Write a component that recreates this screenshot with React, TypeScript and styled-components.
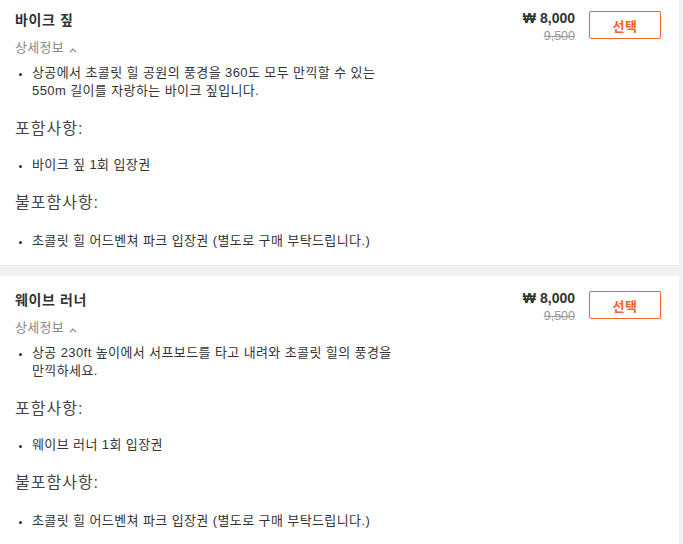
import React from 'react';
import styled, { createGlobalStyle } from 'styled-components';

const GlobalStyle = createGlobalStyle`
  html, body {
    margin: 0;
    padding: 0;
    background: #f2f2f2;
  }
  body {
    font-family: 'Liberation Sans', 'Noto Sans CJK KR', sans-serif;
    color: #333;
  }
`;

interface Product {
  name: string;
  description: string;
  includes: string[];
  excludes: string[];
  price: string;
  originalPrice: string;
}

const products: Product[] = [
  {
    name: '바이크 짚',
    description: '상공에서 초콜릿 힐 공원의 풍경을 360도 모두 만끽할 수 있는 550m 길이를 자랑하는 바이크 짚입니다.',
    includes: ['바이크 짚 1회 입장권'],
    excludes: ['초콜릿 힐 어드벤쳐 파크 입장권 (별도로 구매 부탁드립니다.)'],
    price: '8,000',
    originalPrice: '9,500',
  },
  {
    name: '웨이브 러너',
    description: '상공 230ft 높이에서 서프보드를 타고 내려와 초콜릿 힐의 풍경을 만끽하세요.',
    includes: ['웨이브 러너 1회 입장권'],
    excludes: ['초콜릿 힐 어드벤쳐 파크 입장권 (별도로 구매 부탁드립니다.)'],
    price: '8,000',
    originalPrice: '9,500',
  },
];

const List = styled.div`
  margin-top: -4px;
  display: flex;
  flex-direction: column;
  gap: 10px;
`;

const Card = styled.section`
  background: #fff;
  margin-right: 4px;
  height: 270px;
  box-sizing: border-box;
  padding: 14px 18px 16px 15px;
  display: flex;
  justify-content: space-between;
  border-bottom: 1px solid #e8e8e8;
`;

const Info = styled.div`
  display: flex;
  flex-direction: column;
  width: 385px;
`;

const Title = styled.h3`
  margin: 0;
  font-size: 14px;
  line-height: 20px;
  font-weight: bold;
  letter-spacing: 0.6px;
  color: #333;
`;

const DetailToggle = styled.div`
  margin-top: 9px;
  font-size: 13px;
  line-height: 18px;
  letter-spacing: 0.3px;
  color: #888;
  display: flex;
  align-items: center;
  gap: 5px;
`;

const Bullets = styled.ul<{ $top: number }>`
  margin: ${p => p.$top}px 0 0;
  padding-left: 17px;
  font-size: 13px;
  line-height: 18px;
  letter-spacing: 0.4px;
  word-break: keep-all;
  color: #333;

  li::marker {
    font-size: 11px;
  }
`;

const SectionLabel = styled.h4`
  margin: 18px 0 0;
  font-size: 16px;
  line-height: 22px;
  font-weight: normal;
  letter-spacing: 1px;
  color: #444;
`;

const Side = styled.div`
  display: flex;
  align-items: flex-start;
  gap: 14px;
`;

const Prices = styled.div`
  display: flex;
  flex-direction: column;
  align-items: flex-end;
`;

const Price = styled.span`
  font-size: 14px;
  line-height: 16px;
  font-weight: bold;
  color: #333;
`;

const OldPrice = styled.span`
  font-size: 12.5px;
  line-height: 20px;
  color: #999;
  text-decoration: line-through;
`;

const SelectButton = styled.button`
  margin-top: 1px;
  width: 72px;
  height: 28px;
  box-sizing: border-box;
  background: #fff;
  border: 1px solid #f4622d;
  border-radius: 2px;
  color: #f4622d;
  font-family: inherit;
  font-size: 13px;
  font-weight: bold;
  letter-spacing: 0.5px;
  cursor: pointer;
`;

function Chevron () {
  return (
    <svg width="8" height="5" viewBox="0 0 8 5" style={{ marginTop: 4 }}>
      <path d="M0.7 4.3 L4 1 L7.3 4.3" fill="none" stroke="#888" strokeWidth="1.1" />
    </svg>
  );
}

function ProductCard ({ product }: { product: Product }) {
  return (
    <Card>
      <Info>
        <Title>{product.name}</Title>
        <DetailToggle>상세정보 <Chevron /></DetailToggle>
        <Bullets $top={7}>
          <li>{product.description}</li>
        </Bullets>
        <SectionLabel>포함사항:</SectionLabel>
        <Bullets $top={16}>
          {product.includes.map(item => <li key={item}>{item}</li>)}
        </Bullets>
        <SectionLabel>불포함사항:</SectionLabel>
        <Bullets $top={18}>
          {product.excludes.map(item => <li key={item}>{item}</li>)}
        </Bullets>
      </Info>
      <Side>
        <Prices>
          <Price>₩ {product.price}</Price>
          <OldPrice>{product.originalPrice}</OldPrice>
        </Prices>
        <SelectButton>선택</SelectButton>
      </Side>
    </Card>
  );
}

export default function App () {
  return (
    <>
      <GlobalStyle />
      <List>
        {products.map(p => <ProductCard key={p.name} product={p} />)}
      </List>
    </>
  );
}
